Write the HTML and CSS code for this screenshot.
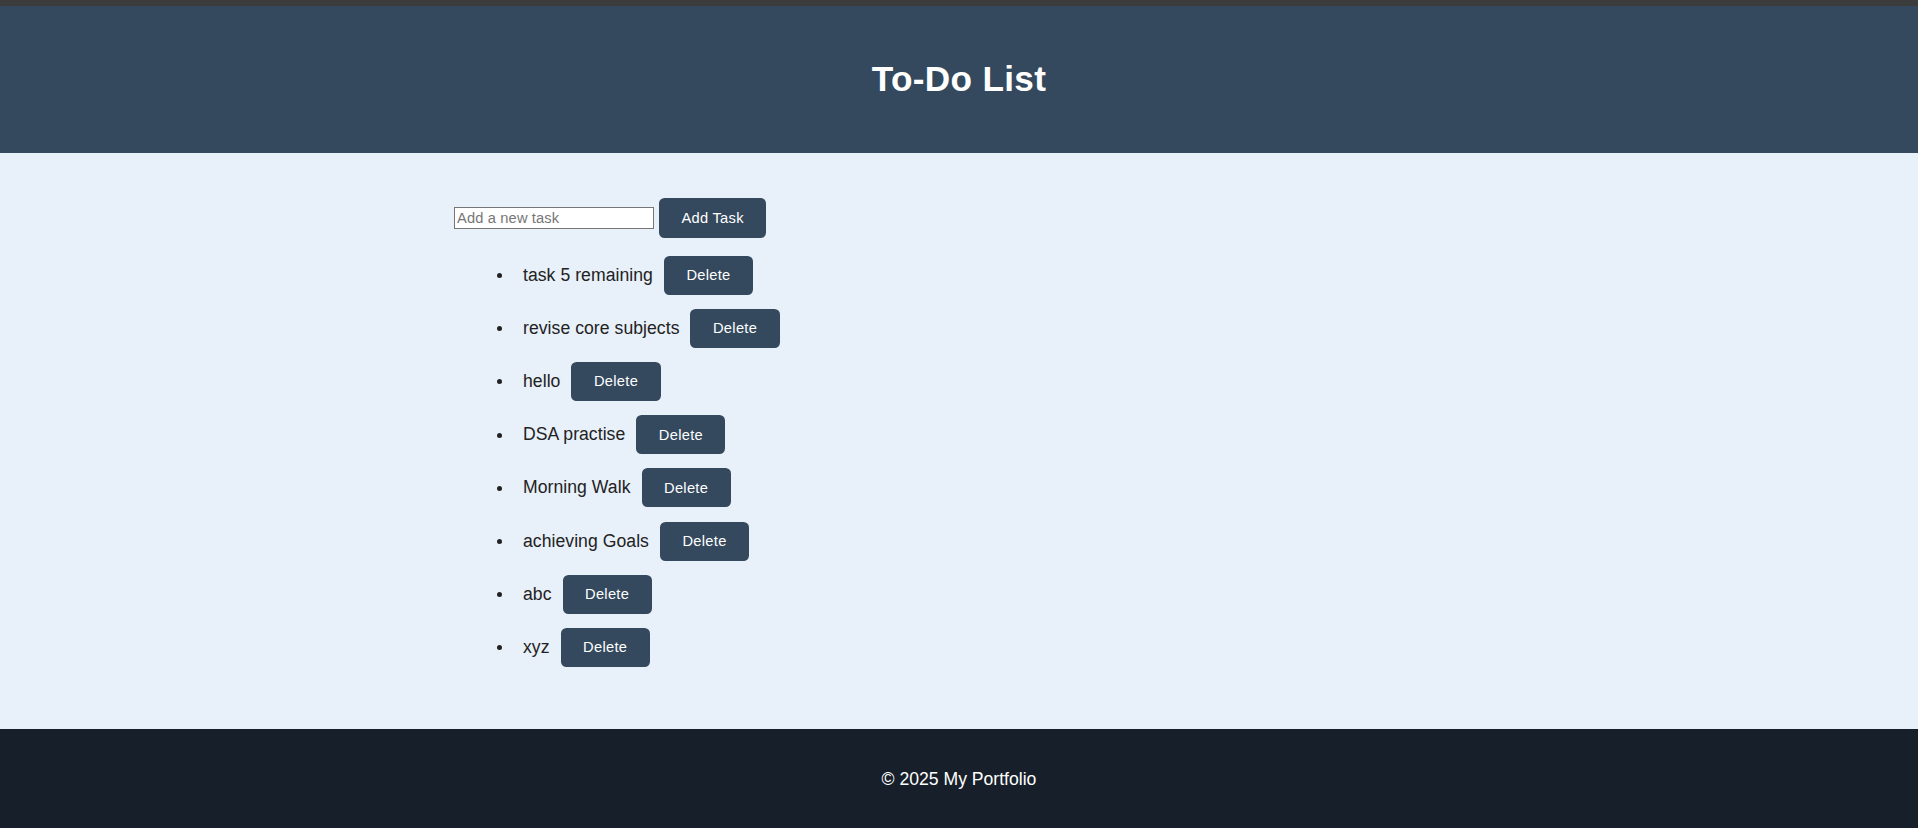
FILE: index.html
```html
<!DOCTYPE html>
<html lang="en">
<head>
<meta charset="utf-8">
<title>To-Do List</title>
<link rel="stylesheet" href="styles.css">
</head>
<body>
<div class="topbar"></div>
<header class="site-header">
  <h1 class="title">To-Do List</h1>
</header>
<main class="main">
  <div class="container">
    <div class="add-row">
      <input class="task-input" type="text" placeholder="Add a new task"> <button class="btn">Add Task</button>
    </div>
    <ul class="task-list">
      <li class="task">task 5 remaining<button class="btn btn-delete">Delete</button></li>
      <li class="task">revise core subjects<button class="btn btn-delete">Delete</button></li>
      <li class="task">hello<button class="btn btn-delete">Delete</button></li>
      <li class="task">DSA practise<button class="btn btn-delete">Delete</button></li>
      <li class="task">Morning Walk<button class="btn btn-delete">Delete</button></li>
      <li class="task">achieving Goals<button class="btn btn-delete">Delete</button></li>
      <li class="task">abc<button class="btn btn-delete">Delete</button></li>
      <li class="task">xyz<button class="btn btn-delete">Delete</button></li>
    </ul>
  </div>
</main>
<footer class="site-footer">
  <p class="footer-text">© 2025 My Portfolio</p>
</footer>
</body>
</html>
```

FILE: styles.css
```css
* { box-sizing: border-box; }

html, body {
  margin: 0;
  padding: 0;
}

body {
  font-family: "Liberation Sans", Arial, sans-serif;
  font-size: 17.6px;
  color: #222;
  background: #e8f0f9;
  overflow: hidden;
}

.topbar {
  height: 6px;
  background: #3c3c3c;
}

.site-header {
  height: 147px;
  background: #34495e;
  display: flex;
  align-items: center;
  justify-content: center;
}

.title {
  margin: 0 0 2px;
  color: #fff;
  font-size: 35.2px;
  font-weight: bold;
  letter-spacing: 0.3px;
}

.main {
  background: #e8f0f9;
  padding: 45px 0 0;
  height: 576px;
}

.container {
  max-width: 1010px;
  margin: 0 auto;
}

.add-row {
  line-height: normal;
}

.task-input {
  width: 200px;
  height: 22px;
  font-family: "Liberation Sans", Arial, sans-serif;
  font-size: 14.67px;
  letter-spacing: 0.15px;
  padding: 1px 2px;
  border: 1px solid #767676;
  border-radius: 0;
  background: #fff;
  color: #222;
  vertical-align: middle;
}

.task-input::placeholder {
  color: #767676;
}

.btn {
  font-family: "Liberation Sans", Arial, sans-serif;
  font-size: 14.67px;
  letter-spacing: 0.3px;
  background: #34495e;
  color: #fff;
  border: none;
  border-radius: 5.5px;
  padding: 11px 22.5px;
  line-height: normal;
  cursor: pointer;
}

.add-row .btn {
  vertical-align: middle;
  height: 40px;
}

.task-list {
  margin: 17.6px 0 0;
  padding: 0 0 0 60px;
}

.task {
  padding-left: 9px;
  margin-bottom: 14.2px;
  line-height: normal;
  letter-spacing: 0.05px;
}

.btn-delete {
  margin-left: 11px;
  height: 39px;
}

.site-footer {
  background: #17202a;
  height: 99px;
  display: flex;
  align-items: center;
  justify-content: center;
}

.footer-text {
  margin: 0;
  color: #fff;
  font-size: 17.6px;
  padding-top: 2px;
}
```
